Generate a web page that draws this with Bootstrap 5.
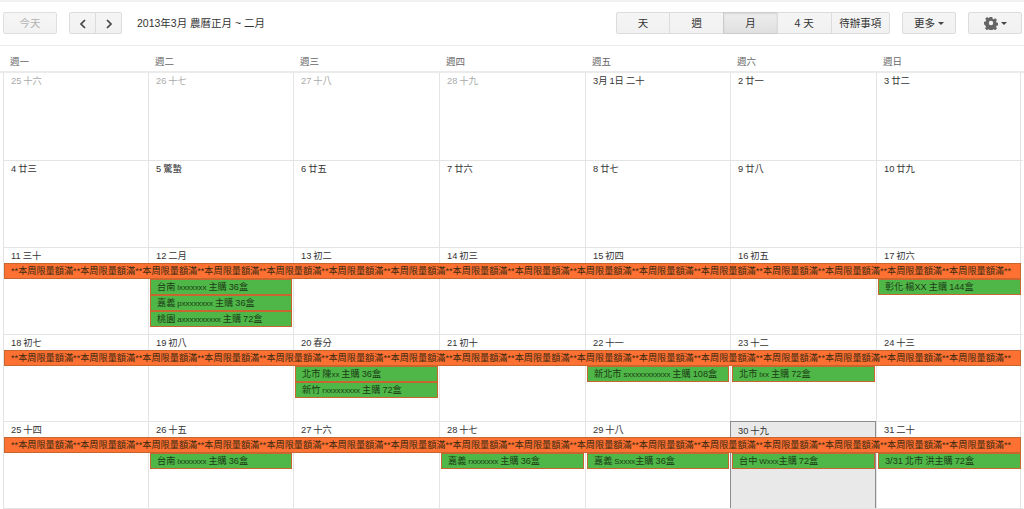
<!DOCTYPE html>
<html lang="zh-Hant">
<head>
  <meta charset="UTF-8">
  <meta name="viewport" content="width=device-width, initial-scale=1">
  <title>月曆</title>
  <link href="https://cdn.jsdelivr.net/npm/bootstrap@5.3.0/dist/css/bootstrap.min.css" rel="stylesheet">
  <style>
    body {
      font-family: "Liberation Sans", "Noto Sans CJK TC", sans-serif;
      font-size: 10px;
      color: #222;
      background: #fff;
      border-top: 2px solid #f1f1f1;
      height: 509px;
      overflow: hidden;
    }
    .cal-toolbar {
      height: 44px;
      padding: 10px 2px 0 3px;
      border-bottom: 1px solid #ebebeb;
    }
    .gbtn {
      height: 22px;
      padding: 0;
      font-size: 10.5px;
      line-height: 20px;
      color: #333;
      background: linear-gradient(#f5f5f5, #f1f1f1);
      border: 1px solid #dcdcdc;
      border-radius: 2px;
      width: 54px;
    }
    .gbtn:hover { color: #333; background: #f1f1f1; border-color: #dcdcdc; }
    .gbtn-today { color: #aaa; opacity: .9; }
    .gbtn-nav { width: 27px; }
    .gbtn-view { width: 54.7px; }
    .gbtn-on { background: linear-gradient(#eee, #e0e0e0); border-color: #ccc; box-shadow: inset 0 1px 2px rgba(0,0,0,.1); }
    .gbtn-wide { width: 59.5px; }
    .gap-12 { margin-left: 12px; }
    .range-title { margin: 5px 0 0 15px; font-size: 10.5px; line-height: 12px; color: #333; }
    .gear-icon { vertical-align: -3px; }
    .caret-down { display: inline-block; margin-left: 3px; vertical-align: 2px; border: 3px solid transparent; border-top-color: #444; border-bottom: 0; }
    .head-row, .week-row { display: grid; grid-template-columns: 145px 145px 146px 146px 145px 146px 146px; margin-left: 3px; width: 1020px; }
    .head-row { height: 25px; }
    .head-row div { padding: 9px 0 0 7px; color: #666; font-size: 9.5px; line-height: 14px; }
    .cal-grid { border-top: 2px solid #ebebeb; }
    .week-row { grid-template-rows: 15px repeat(4, 16px) 1fr; height: 87px; border-bottom: 1px solid #e4e4e4; }
    .week-first { height: 88px; }
    .week-end { height: 87px; }
    .day-box {
      grid-row: 1 / -1;
      border-left: 1px solid #e4e4e4;
      padding: 1px 0 0 7px;
      line-height: 14px;
      font-size: 9.3px;
      word-spacing: -.6px;
      color: #333;
    }
    .day-box.day-last { border-right: 1px solid #e4e4e4; margin-right: 1px; }
    .day-out { color: #aaa; }
    .day-now { background: #e9e9e9; border: 1px solid #8c8c8c; border-bottom: 0; margin-top: -1px; padding-top: 2px; }
    .ev-full, .ev-green {
      grid-row: 2;
      height: 16px;
      line-height: 14px;
      font-size: 9.16px;
      white-space: nowrap;
      overflow: hidden;
      color: #3a2a10;
      border: 1px solid #c8662f;
    }
    .ev-full { grid-column: 1 / -1; background: #ff7033; padding-left: 6px; margin: 0 1px 0 1px; }
    .ev-green { background: #4fb648; color: #1c3d16; padding-left: 6px; margin: 0 1px 0 2px; word-spacing: -.5px; }
    .ev-latin { font-size: 8px; letter-spacing: -.1px; }
    .c1 { grid-column: 1; } .c2 { grid-column: 2; } .c3 { grid-column: 3; } .c4 { grid-column: 4; }
    .c5 { grid-column: 5; } .c6 { grid-column: 6; } .c7 { grid-column: 7; }
    .r3 { grid-row: 3; } .r4 { grid-row: 4; } .r5 { grid-row: 5; }
  </style>
</head>
<body>
  <div class="cal-toolbar d-flex align-items-start">
    <button class="btn gbtn gbtn-today">今天</button>
    <div class="btn-group gap-12" role="group">
      <button class="btn gbtn gbtn-nav" aria-label="上一頁"><svg width="8" height="10" viewBox="0 0 8 10"><path d="M6 1 2 5l4 4" fill="none" stroke="#444" stroke-width="1.7"/></svg></button>
      <button class="btn gbtn gbtn-nav" aria-label="下一頁"><svg width="8" height="10" viewBox="0 0 8 10"><path d="M2 1l4 4-4 4" fill="none" stroke="#444" stroke-width="1.7"/></svg></button>
    </div>
    <div class="range-title">2013年3月 農曆正月 ~ 二月</div>
    <div class="btn-group ms-auto" role="group">
      <button class="btn gbtn gbtn-view">天</button>
      <button class="btn gbtn gbtn-view">週</button>
      <button class="btn gbtn gbtn-view gbtn-on">月</button>
      <button class="btn gbtn gbtn-view">4 天</button>
      <button class="btn gbtn gbtn-wide">待辦事項</button>
    </div>
    <button class="btn gbtn gap-12">更多<span class="caret-down"></span></button>
    <button class="btn gbtn gap-12" aria-label="設定">
      <svg class="gear-icon" width="14" height="14" viewBox="0 0 14 14"><path fill="#666" fill-rule="evenodd" d="M5.7 1h2.6l.3 1.7 1.1.5 1.5-1 1.8 1.8-1 1.5.5 1.1 1.7.3v2.6l-1.7.3-.5 1.1 1 1.5-1.8 1.8-1.5-1-1.1.5-.3 1.7H5.7l-.3-1.7-1.1-.5-1.5 1-1.8-1.8 1-1.5-.5-1.1L0 8.3V5.7l1.7-.3.5-1.1-1-1.5L3 1l1.5 1 1.1-.5zM7 4.8a2.2 2.2 0 1 0 0 4.4 2.2 2.2 0 0 0 0-4.4z"/></svg><span class="caret-down"></span>
    </button>
  </div>

  <div class="head-row">
    <div>週一</div><div>週二</div><div>週三</div><div>週四</div><div>週五</div><div>週六</div><div>週日</div>
  </div>

  <div class="cal-grid">
    <div class="week-row week-first">
      <div class="day-box c1 day-out">25 十六</div>
      <div class="day-box c2 day-out">26 十七</div>
      <div class="day-box c3 day-out">27 十八</div>
      <div class="day-box c4 day-out">28 十九</div>
      <div class="day-box c5">3月 1日 二十</div>
      <div class="day-box c6">2 廿一</div>
      <div class="day-box c7 day-last">3 廿二</div>
    </div>
    <div class="week-row">
      <div class="day-box c1">4 廿三</div>
      <div class="day-box c2">5 驚蟄</div>
      <div class="day-box c3">6 廿五</div>
      <div class="day-box c4">7 廿六</div>
      <div class="day-box c5">8 廿七</div>
      <div class="day-box c6">9 廿八</div>
      <div class="day-box c7 day-last">10 廿九</div>
    </div>
    <div class="week-row">
      <div class="day-box c1">11 三十</div>
      <div class="day-box c2">12 二月</div>
      <div class="day-box c3">13 初二</div>
      <div class="day-box c4">14 初三</div>
      <div class="day-box c5">15 初四</div>
      <div class="day-box c6">16 初五</div>
      <div class="day-box c7 day-last">17 初六</div>
      <div class="ev-full">**本周限量額滿**本周限量額滿**本周限量額滿**本周限量額滿**本周限量額滿**本周限量額滿**本周限量額滿**本周限量額滿**本周限量額滿**本周限量額滿**本周限量額滿**本周限量額滿**本周限量額滿**本周限量額滿**本周限量額滿**本周限量額滿**</div>
      <div class="ev-green c2 r3">台南 <span class="ev-latin">lxxxxxxx</span> 主購 36盒</div>
      <div class="ev-green c2 r4">嘉義 <span class="ev-latin">pxxxxxxxx</span> 主購 36盒</div>
      <div class="ev-green c2 r5">桃園 <span class="ev-latin">axxxxxxxxxx</span> 主購 72盒</div>
      <div class="ev-green c7 r3">彰化 楊XX 主購 144盒</div>
    </div>
    <div class="week-row">
      <div class="day-box c1">18 初七</div>
      <div class="day-box c2">19 初八</div>
      <div class="day-box c3">20 春分</div>
      <div class="day-box c4">21 初十</div>
      <div class="day-box c5">22 十一</div>
      <div class="day-box c6">23 十二</div>
      <div class="day-box c7 day-last">24 十三</div>
      <div class="ev-full">**本周限量額滿**本周限量額滿**本周限量額滿**本周限量額滿**本周限量額滿**本周限量額滿**本周限量額滿**本周限量額滿**本周限量額滿**本周限量額滿**本周限量額滿**本周限量額滿**本周限量額滿**本周限量額滿**本周限量額滿**本周限量額滿**</div>
      <div class="ev-green c3 r3">北市 陳<span class="ev-latin">xx</span> 主購 36盒</div>
      <div class="ev-green c3 r4">新竹 <span class="ev-latin">rxxxxxxxxx</span> 主購 72盒</div>
      <div class="ev-green c5 r3">新北市 <span class="ev-latin">sxxxxxxxxxxx</span> 主購 108盒</div>
      <div class="ev-green c6 r3">北市 <span class="ev-latin">lxx</span> 主購 72盒</div>
    </div>
    <div class="week-row week-end">
      <div class="day-box c1">25 十四</div>
      <div class="day-box c2">26 十五</div>
      <div class="day-box c3">27 十六</div>
      <div class="day-box c4">28 十七</div>
      <div class="day-box c5">29 十八</div>
      <div class="day-box c6 day-now">30 十九</div>
      <div class="day-box c7 day-last">31 二十</div>
      <div class="ev-full">**本周限量額滿**本周限量額滿**本周限量額滿**本周限量額滿**本周限量額滿**本周限量額滿**本周限量額滿**本周限量額滿**本周限量額滿**本周限量額滿**本周限量額滿**本周限量額滿**本周限量額滿**本周限量額滿**本周限量額滿**本周限量額滿**</div>
      <div class="ev-green c2 r3">台南 <span class="ev-latin">lxxxxxxx</span> 主購 36盒</div>
      <div class="ev-green c4 r3">嘉義 <span class="ev-latin">rxxxxxxx</span> 主購 36盒</div>
      <div class="ev-green c5 r3">嘉義 <span class="ev-latin">Sxxxx</span>主購 36盒</div>
      <div class="ev-green c6 r3">台中 <span class="ev-latin">Wxxx</span>主購 72盒</div>
      <div class="ev-green c7 r3">3/31 北市 洪主購 72盒</div>
    </div>
  </div>

  <script src="https://cdn.jsdelivr.net/npm/bootstrap@5.3.0/dist/js/bootstrap.bundle.min.js"></script>
</body>
</html>
